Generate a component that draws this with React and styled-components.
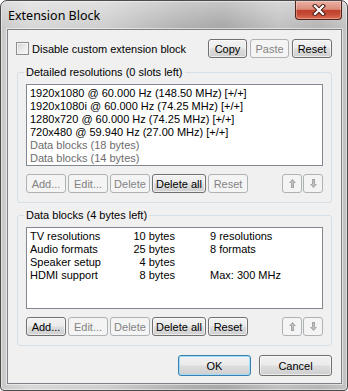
import React from 'react'
import styled, { createGlobalStyle } from 'styled-components'

const GlobalStyle = createGlobalStyle`
  html, body {
    margin: 0;
    padding: 0;
    background: #ffffff;
  }
  body {
    font-family: "Liberation Sans", Arial, sans-serif;
    font-size: 11px;
    color: #000;
  }
`

const Window = styled.div`
  box-sizing: border-box;
  width: 348px;
  height: 391px;
  border: 1px solid #4b4b4b;
  border-radius: 7px 7px 4px 4px;
  padding: 0 5px 6px 6px;
  display: flex;
  flex-direction: column;
  background:
    linear-gradient(180deg, rgba(255,255,255,0.35) 0px, rgba(255,255,255,0) 26px),
    linear-gradient(90deg, #c9c9c9 0%, #d8d8d8 8%, #cfcfcf 30%, #b2b2b2 52%, #a8a8a8 64%, #c2c2c2 80%, #b6b6b6 92%, #c4c4c4 100%);
  box-shadow: inset 0 0 0 1px rgba(255,255,255,0.45);
`

const TitleBar = styled.div`
  height: 28px;
  display: flex;
  justify-content: space-between;
  align-items: flex-start;
`

const Title = styled.div`
  font-family: "Noto Sans", "Open Sans", sans-serif;
  font-size: 12.5px;
  line-height: 29px;
  padding-left: 1px;
  color: #000;
`

const CloseButton = styled.div`
  box-sizing: border-box;
  width: 47px;
  height: 19px;
  border: 1px solid #54231a;
  border-top: none;
  border-radius: 0 0 4px 4px;
  background: linear-gradient(180deg, #eab0a3 0%, #dc8d7c 46%, #c1422e 52%, #c34a35 72%, #dc6e52 100%);
  box-shadow: inset 0 0 0 1px rgba(255,255,255,0.3);
  display: flex;
  align-items: center;
  justify-content: center;
`

const Client = styled.div`
  flex: 1;
  border: 1px solid #7d8288;
  background: #f0f0f0;
  box-shadow: 0 0 0 1px rgba(255,255,255,0.5);
  padding: 9px 9px 0 9px;
  display: flex;
  flex-direction: column;
`

const TopRow = styled.div`
  display: flex;
  align-items: center;
  height: 19px;
`

const CheckLabel = styled.label`
  display: flex;
  align-items: center;
  gap: 3px;
  margin-left: -1px;
  flex: 1;
`

const CheckBox = styled.span`
  box-sizing: border-box;
  width: 13px;
  height: 13px;
  border: 1px solid #8e8f8f;
  background: linear-gradient(135deg, #d2d2d2 0%, #ececec 55%, #fafafa 100%);
  box-shadow: inset 0 0 0 1px #f4f4f4;
`

const ButtonGroup = styled.div`
  display: flex;
  gap: ${p => p.$gap ?? 2}px;
  margin-left: ${p => (p.$push ? 'auto' : '0')};
`

const Button = styled.button`
  box-sizing: border-box;
  width: ${p => p.$w}px;
  height: ${p => p.$h ?? 19}px;
  padding: 0;
  margin: 0;
  font-family: "Liberation Sans", Arial, sans-serif;
  font-size: 11px;
  color: #000;
  border: 1px solid ${p => (p.$default ? '#3c7fb1' : '#707070')};
  border-radius: 3px;
  background: linear-gradient(180deg, #f2f2f2 0%, #ebebeb 48%, #dddddd 52%, #cfcfcf 100%);
  box-shadow: inset 0 0 0 1px ${p => (p.$default ? '#9fdcf6' : 'rgba(255,255,255,0.6)')};
  display: flex;
  align-items: center;
  justify-content: center;

  &:disabled {
    color: #838383;
    border-color: #adb2b5;
    background: #f4f4f4;
    box-shadow: none;
  }
`

const Group = styled.div`
  margin-top: ${p => p.$top}px;
  border: 1px solid #d5dfe5;
  border-radius: 3px;
  padding: 0 8px 9px 8px;
`

const GroupTitle = styled.div`
  width: fit-content;
  margin: -7px 0 5px -2px;
  padding: 0 2px;
  line-height: 13px;
  background: #f0f0f0;
`

const ListBox = styled.div`
  box-sizing: border-box;
  height: 82px;
  border: 1px solid #828790;
  background: #ffffff;
  padding: 2px 3px;
  line-height: 13px;
`

const Line = styled.div`
  white-space: nowrap;
  color: ${p => (p.$dim ? '#6d6d6d' : '#000')};
`

const DataRow = styled.div`
  display: grid;
  grid-template-columns: 101px 44px 1fr;
  white-space: nowrap;
`

const Cell = styled.span`
  text-align: ${p => (p.$right ? 'right' : 'left')};
  padding-left: ${p => p.$pad ?? 0}px;
`

const ActionRow = styled.div`
  display: flex;
  margin-top: 8px;
`

const Footer = styled.div`
  display: flex;
  justify-content: flex-end;
  gap: 8px;
  margin-top: 9px;
`

const Arrow = ({ down }) => (
  <svg width="7" height="9" viewBox="0 0 7 9" style={down ? { transform: 'rotate(180deg)' } : undefined}>
    <path d="M3.5 0 L7 4 H5 V9 H2 V4 H0 Z" fill="#a3a3a3" />
    <path d="M3.5 1.5 L5.5 3.8 H4 V8 H3 V3.8 H1.5 Z" fill="#c4c4c4" />
  </svg>
)

const CloseGlyph = () => (
  <svg width="14" height="12" viewBox="0 0 14 12">
    <path d="M3 2 L11 10 M11 2 L3 10" stroke="#4a1c14" strokeWidth="4.2" strokeLinecap="square" />
    <path d="M3 2 L11 10 M11 2 L3 10" stroke="#ffffff" strokeWidth="2.2" strokeLinecap="square" />
  </svg>
)

const resolutions = [
  { text: '1920x1080 @ 60.000 Hz (148.50 MHz) [+/+]' },
  { text: '1920x1080i @ 60.000 Hz (74.25 MHz) [+/+]' },
  { text: '1280x720 @ 60.000 Hz (74.25 MHz) [+/+]' },
  { text: '720x480 @ 59.940 Hz (27.00 MHz) [+/+]' },
  { text: 'Data blocks (18 bytes)', dim: true },
  { text: 'Data blocks (14 bytes)', dim: true },
]

const dataBlocks = [
  ['TV resolutions', '10 bytes', '9 resolutions'],
  ['Audio formats', '25 bytes', '8 formats'],
  ['Speaker setup', '4 bytes', ''],
  ['HDMI support', '8 bytes', 'Max: 300 MHz'],
]

const Actions = ({ addEnabled, resetEnabled }) => (
  <ActionRow>
    <ButtonGroup>
      <Button $w={40} disabled={!addEnabled}>Add...</Button>
      <Button $w={40} disabled>Edit...</Button>
      <Button $w={40} disabled>Delete</Button>
      <Button $w={54}>Delete all</Button>
      <Button $w={40} disabled={!resetEnabled}>Reset</Button>
    </ButtonGroup>
    <ButtonGroup $push $gap={1}>
      <Button $w={20} disabled><Arrow /></Button>
      <Button $w={20} disabled><Arrow down /></Button>
    </ButtonGroup>
  </ActionRow>
)

export default function App() {
  return (
    <>
      <GlobalStyle />
      <Window>
        <TitleBar>
          <Title>Extension Block</Title>
          <CloseButton><CloseGlyph /></CloseButton>
        </TitleBar>
        <Client>
          <TopRow>
            <CheckLabel>
              <CheckBox />
              Disable custom extension block
            </CheckLabel>
            <ButtonGroup $gap={3}>
              <Button $w={39}>Copy</Button>
              <Button $w={39} disabled>Paste</Button>
              <Button $w={40}>Reset</Button>
            </ButtonGroup>
          </TopRow>

          <Group $top={14}>
            <GroupTitle>Detailed resolutions (0 slots left)</GroupTitle>
            <ListBox>
              {resolutions.map(r => (
                <Line key={r.text} $dim={r.dim}>{r.text}</Line>
              ))}
            </ListBox>
            <Actions />
          </Group>

          <Group $top={12}>
            <GroupTitle>Data blocks (4 bytes left)</GroupTitle>
            <ListBox>
              {dataBlocks.map(([name, size, info]) => (
                <DataRow key={name}>
                  <Cell>{name}</Cell>
                  <Cell $right>{size}</Cell>
                  <Cell $pad={35}>{info}</Cell>
                </DataRow>
              ))}
            </ListBox>
            <Actions addEnabled resetEnabled />
          </Group>

          <Footer>
            <Button $w={73} $h={21} $default>OK</Button>
            <Button $w={73} $h={21}>Cancel</Button>
          </Footer>
        </Client>
      </Window>
    </>
  )
}
